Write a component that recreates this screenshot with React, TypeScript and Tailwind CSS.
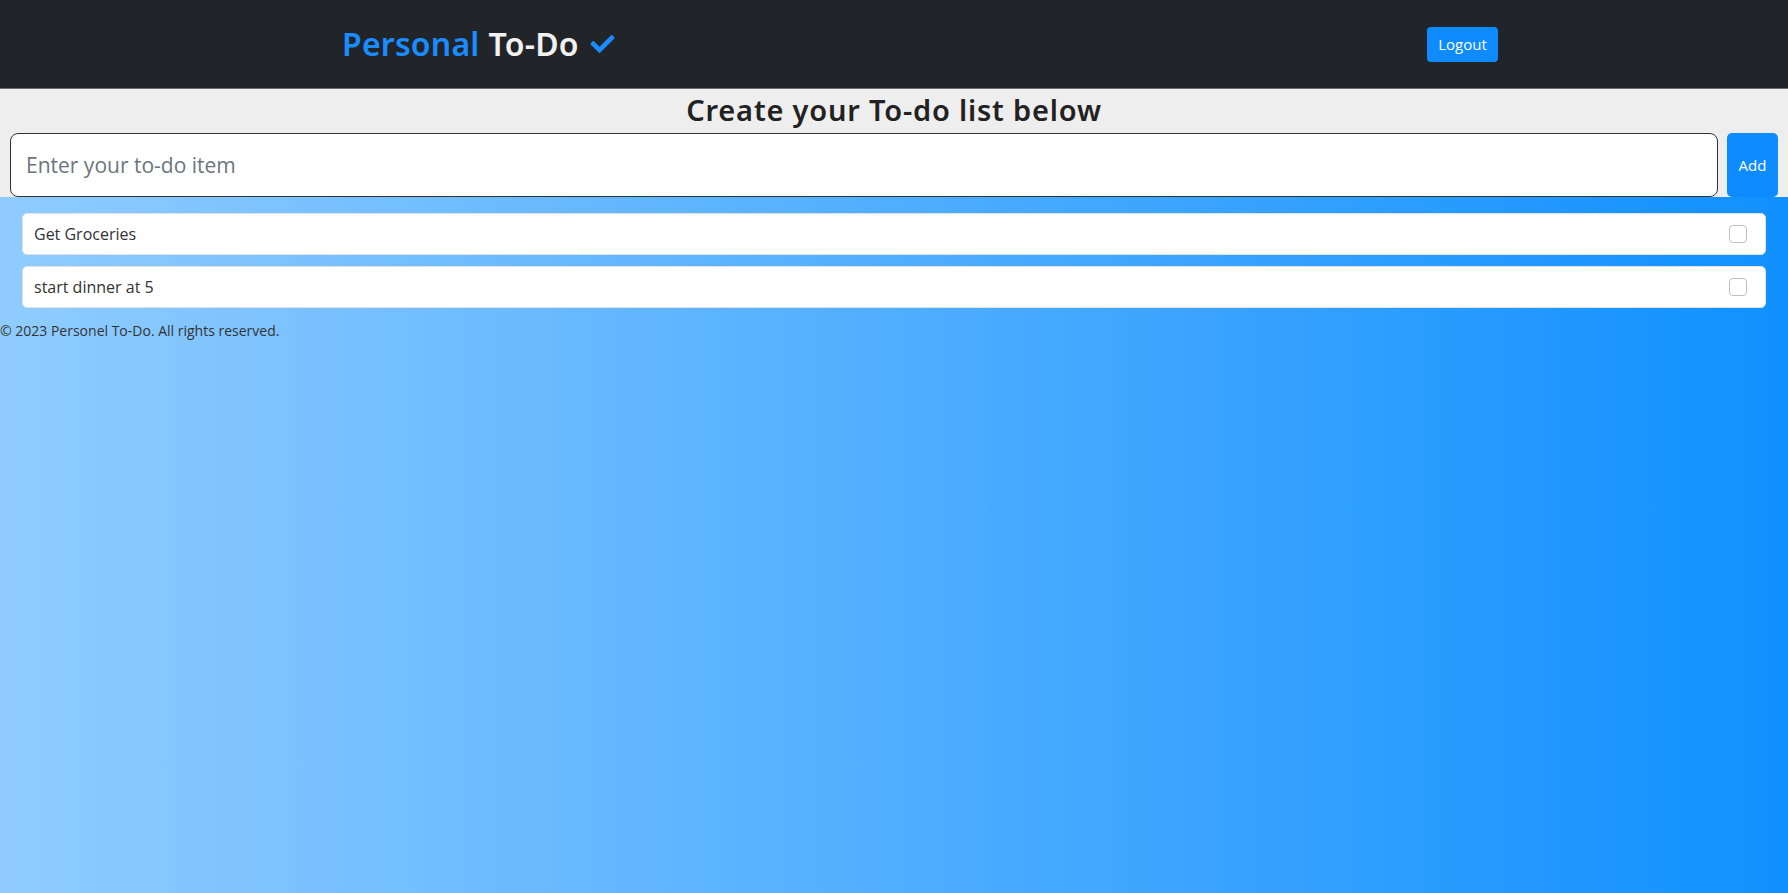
import { useState } from 'react';
import { FaCheck } from 'react-icons/fa';

const todos = [
  { id: 1, text: 'Get Groceries' },
  { id: 2, text: 'start dinner at 5' },
];

export default function App() {
  const [item, setItem] = useState('');
  const [done, setDone] = useState<Record<number, boolean>>({});

  return (
    <div className="min-h-screen bg-[linear-gradient(to_right,#90ccff,#1090ff)] font-['Segoe_UI','Liberation_Sans',sans-serif] text-[#212529]">
      <header className="h-[89px] bg-[#212529] flex items-center border-b border-[#6b6b6b]">
        <div className="pl-[342px] flex items-center gap-[9px] font-['Noto_Sans',sans-serif] font-semibold text-[32px] tracking-[0.2px]">
          <span className="text-[#1a8cff]">Personal</span>
          <span className="text-[#f1f1f1]">To-Do</span>
          <FaCheck className="text-[#1a8cff] w-[29px] h-[24px]" />
        </div>
        <button className="ml-auto mr-[290px] w-[71px] h-[35px] rounded-[4px] bg-[#0d8bff] text-white text-[15px] font-['Open_Sans',sans-serif]">
          Logout
        </button>
      </header>

      <section className="bg-[#eeeeee] pt-[1px]">
        <h1 className="text-center font-['Noto_Sans',sans-serif] font-semibold text-[29px] tracking-[0.8px] leading-[40px] text-[#222]">
          Create your To-do list below
        </h1>
        <div className="flex gap-[9px] pl-[10px] pr-[10px] pt-[3px]">
          <input
            value={item}
            onChange={(e) => setItem(e.target.value)}
            placeholder="Enter your to-do item"
            className="flex-1 h-[64px] rounded-[8px] border border-[#333] bg-white px-[15px] text-[21px] font-['Open_Sans',sans-serif] placeholder:text-[#6c757d] outline-none"
          />
          <button className="w-[51px] h-[64px] rounded-[5px] bg-[#0d8bff] text-white text-[15px] font-['Open_Sans',sans-serif]">
            Add
          </button>
        </div>
      </section>

      <ul className="px-[22px] pt-[16px] flex flex-col gap-[11px]">
        {todos.map((t) => (
          <li
            key={t.id}
            className="h-[42px] bg-white rounded-[5px] border border-[#dee2e6] flex items-center justify-between pl-[11px] pr-[18px] text-[16px] font-['Open_Sans',sans-serif] text-[#333]"
          >
            <span>{t.text}</span>
            <button
              onClick={() => setDone({ ...done, [t.id]: !done[t.id] })}
              className="w-[18px] h-[18px] rounded-[4px] border border-[#bfbfbf] bg-white"
            />
          </li>
        ))}
      </ul>

      <footer className="pt-[11px] text-[14px] leading-[24px] font-['Open_Sans',sans-serif] text-[#333]">
        © 2023 Personel To-Do. All rights reserved.
      </footer>
    </div>
  );
}
